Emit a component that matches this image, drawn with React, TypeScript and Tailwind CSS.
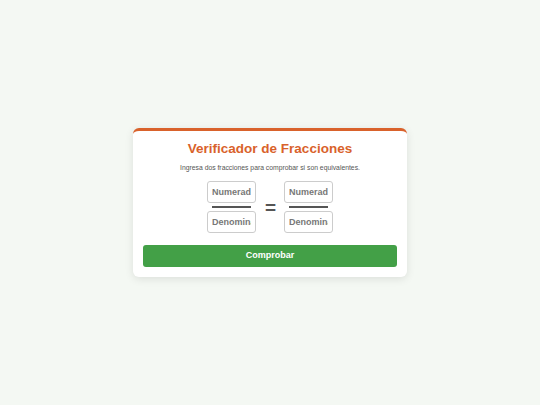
import React, { useState } from "react";

const Fraction: React.FC<{
  num: string;
  den: string;
  onNum: (v: string) => void;
  onDen: (v: string) => void;
}> = ({ num, den, onNum, onDen }) => (
  <div className="flex flex-col items-center">
    <input
      type="text"
      value={num}
      onChange={(e) => onNum(e.target.value)}
      placeholder="Numerador"
      className="w-[49px] h-[22px] border border-[#cccccc] rounded-[3px] bg-white text-center text-[9px] font-bold text-[#555] placeholder:text-[#777] outline-none px-[4px]"
    />
    <div className="w-[39px] h-[2px] bg-[#555] my-[3px]" />
    <input
      type="text"
      value={den}
      onChange={(e) => onDen(e.target.value)}
      placeholder="Denominador"
      className="w-[49px] h-[22px] border border-[#cccccc] rounded-[3px] bg-white text-center text-[9px] font-bold text-[#555] placeholder:text-[#777] outline-none px-[4px]"
    />
  </div>
);

export default function App() {
  const [a, setA] = useState("");
  const [b, setB] = useState("");
  const [c, setC] = useState("");
  const [d, setD] = useState("");

  return (
    <div
      className="min-h-screen bg-[#f4f8f3] flex items-center justify-center"
      style={{ fontFamily: '"Liberation Sans", Arial, sans-serif' }}
    >
      <div className="w-[274px] bg-white rounded-[6px] border-t-[3px] border-[#d9622b] shadow-[0_2px_8px_rgba(0,0,0,0.1)] px-[10px] pt-[9px] pb-[10px] flex flex-col items-center">
        <h1 className="text-[13.5px] font-bold text-[#d9622b] leading-[18px]">
          Verificador de Fracciones
        </h1>
        <p className="text-[6.8px] text-[#555] mt-[5px] leading-[10px]">
          Ingresa dos fracciones para comprobar si son equivalentes.
        </p>
        <div className="flex items-center gap-[9px] mt-[8px]">
          <Fraction num={a} den={b} onNum={setA} onDen={setB} />
          <span className="text-[19px] font-bold text-[#555] w-[10px] text-center leading-none">=</span>
          <Fraction num={c} den={d} onNum={setC} onDen={setD} />
        </div>
        <button className="w-full h-[22px] mt-[12px] bg-[#43a047] rounded-[3px] text-white text-[9px] font-bold">
          Comprobar
        </button>
      </div>
    </div>
  );
}
